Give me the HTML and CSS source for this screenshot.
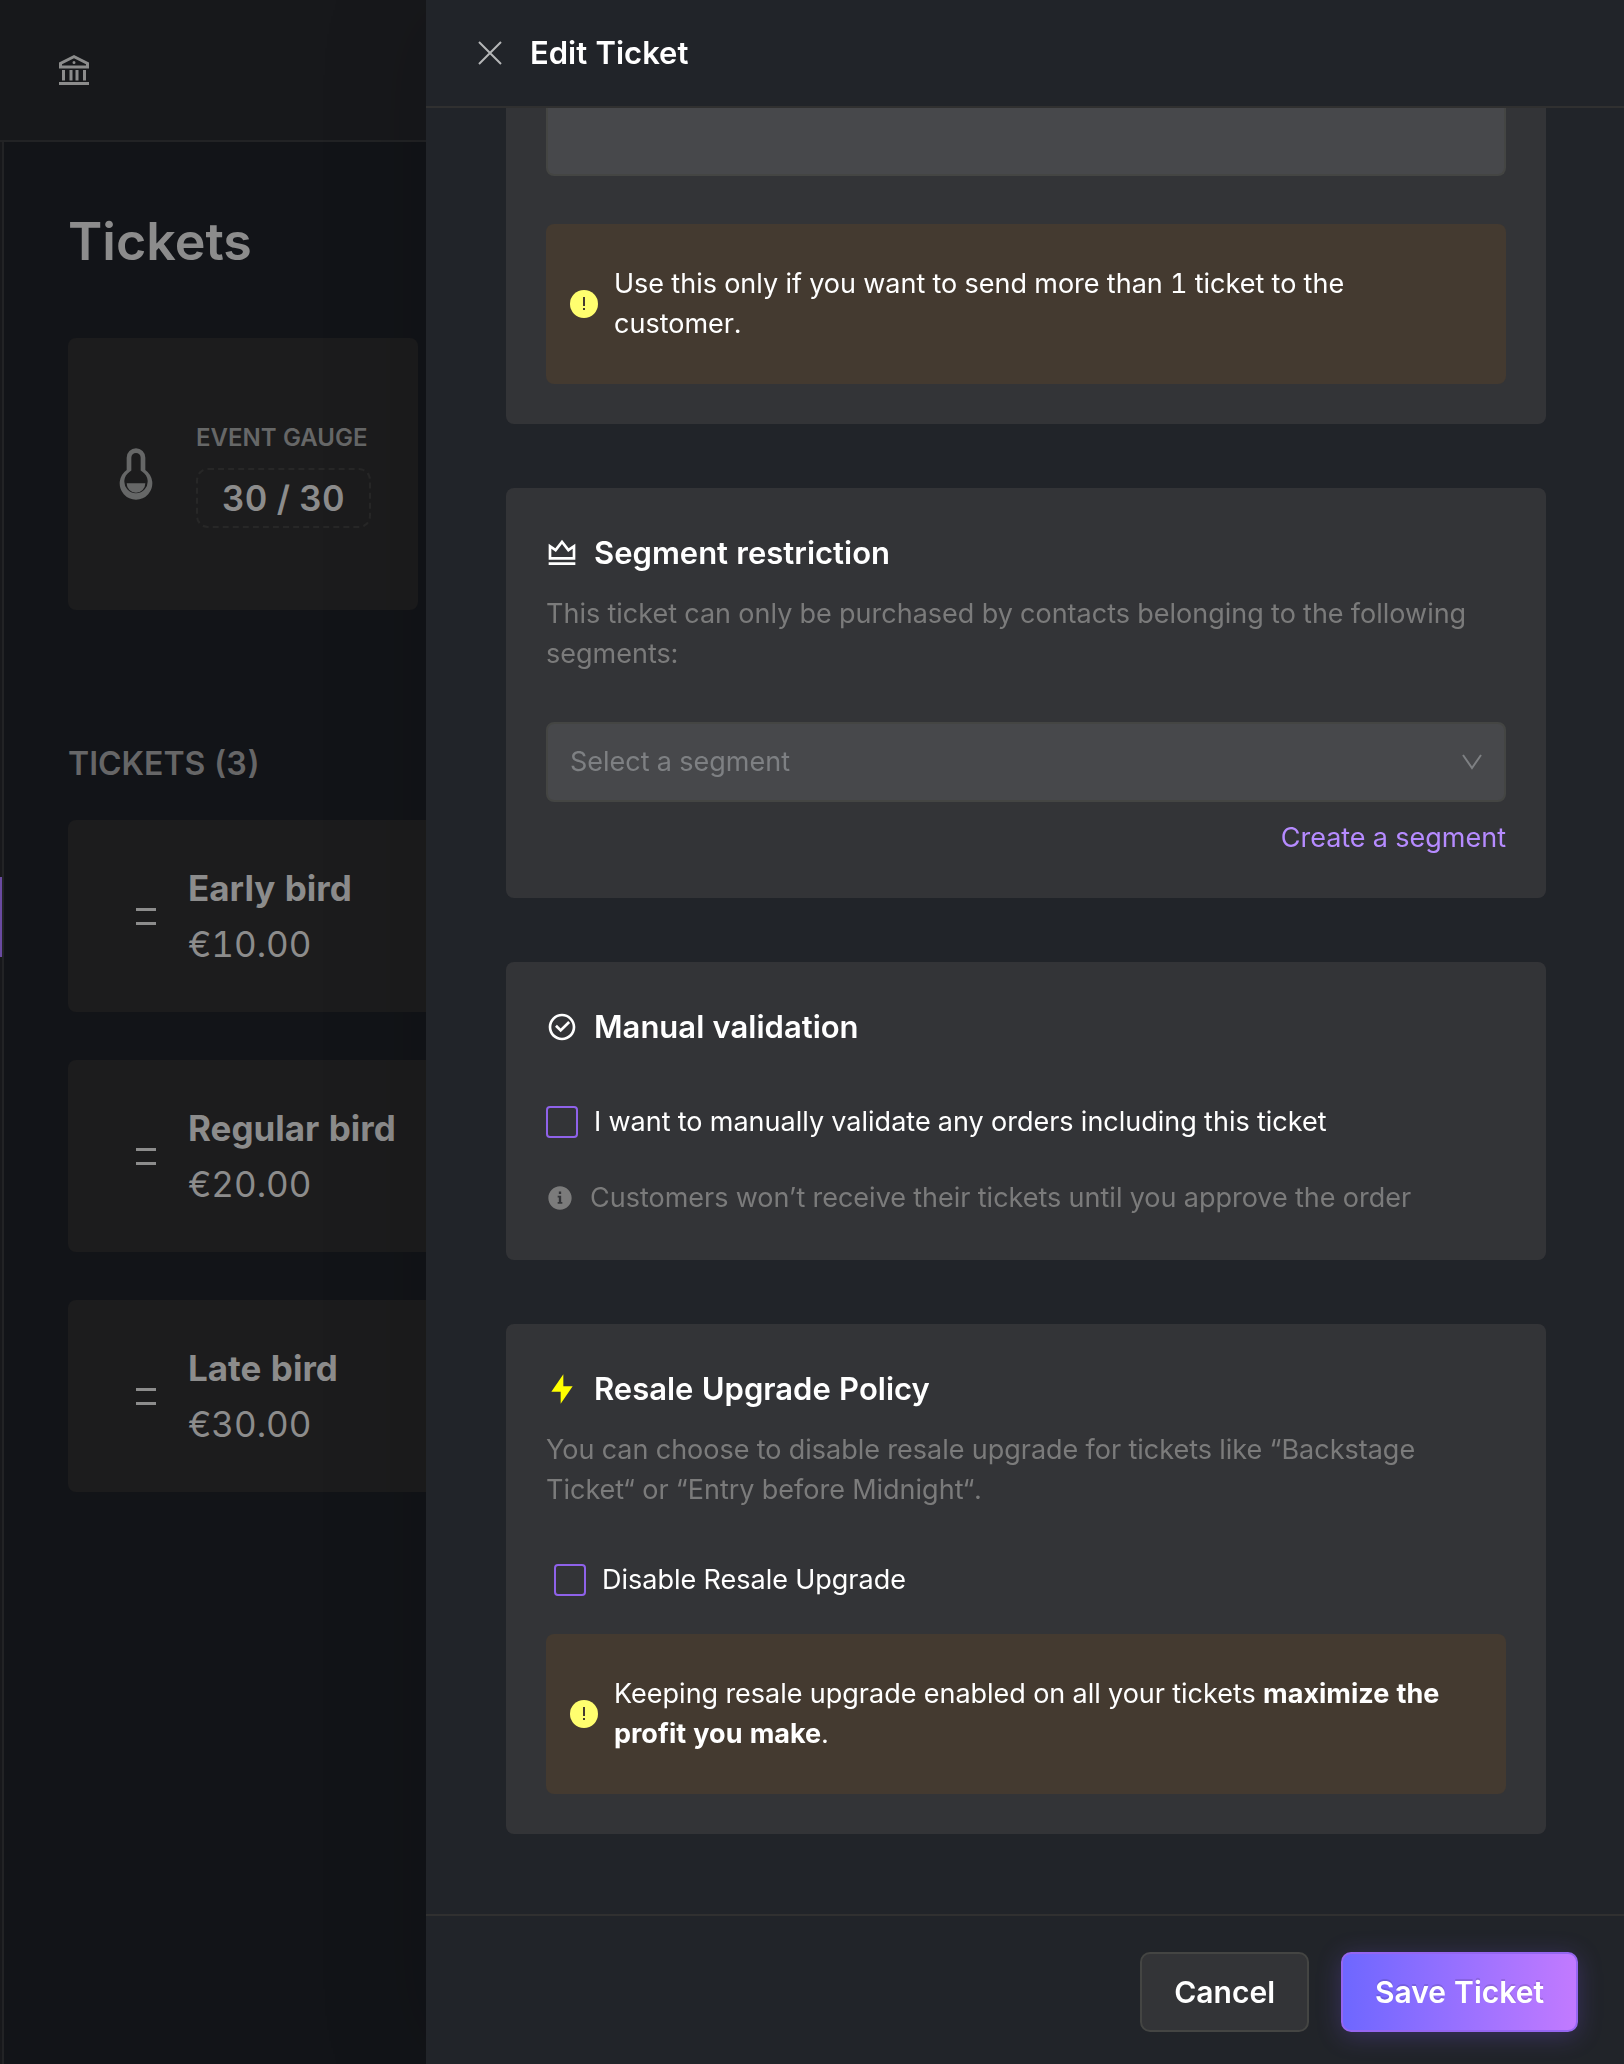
FILE: index.html
```html
<!doctype html>
<html lang="en">
    <head>
        <meta charset="UTF-8" />
        <meta name="viewport" content="width=device-width, initial-scale=1" />
        <title>Edit Ticket</title>
        <link rel="stylesheet" href="styles.css">
    </head>

    <body>
        <div class="app">
            <header class="topbar">
                <svg class="topbar-icon" viewBox="0 0 24 24">
                    <path d="M2 20h20v2H2v-2zm2-8h2v7H4v-7zm5 0h2v7H9v-7zm4 0h2v7h-2v-7zm5 0h2v7h-2v-7zM2 7l10-5 10 5v4H2V7zm2 1.236V9h16v-.764l-8-4-8 4zM12 8a1 1 0 1 1 0-2 1 1 0 0 1 0 2z" />
                </svg>
            </header>
            <div class="layout">
                <nav class="sidebar"><span class="sidebar-active"></span></nav>
                <main class="content">
                    <h1>Tickets</h1>
                    <section class="gauge">
                        <svg class="gauge-icon" viewBox="0 0 24 24">
                            <path d="M8 10.255V5a4 4 0 1 1 8 0v5.255a7 7 0 1 1-8 0zM8 16a4 4 0 1 0 8 0H8zm1.144-4.895a5 5 0 1 0 5.712 0L14 10.511V5a2 2 0 1 0-4 0v5.51l-.856.595z" />
                        </svg>
                        <div>
                            <div class="gauge-label">EVENT GAUGE</div>
                            <div class="gauge-value">30 / 30</div>
                        </div>
                    </section>
                    <h2>TICKETS (3)</h2>
                    <ul class="tickets">
                        <li class="ticket">
                            <span class="handle"></span>
                            <div>
                                <strong>Early bird</strong>
                                <p>€10.00</p>
                            </div>
                        </li>
                        <li class="ticket">
                            <span class="handle"></span>
                            <div>
                                <strong>Regular bird</strong>
                                <p>€20.00</p>
                            </div>
                        </li>
                        <li class="ticket">
                            <span class="handle"></span>
                            <div>
                                <strong>Late bird</strong>
                                <p>€30.00</p>
                            </div>
                        </li>
                    </ul>
                </main>
            </div>
        </div>

        <form class="drawer" role="dialog" aria-labelledby="drawer-title">
            <header class="drawer-header">
                <button type="button" class="close" aria-label="Close">
                    <svg viewBox="0 0 24 24">
                        <path d="M1 1l22 22M23 1L1 23" />
                    </svg>
                </button>
                <div class="drawer-title" id="drawer-title">Edit Ticket</div>
            </header>

            <div class="drawer-body">
                <section class="card card-first">
                    <input type="text" class="field" aria-label="Tickets per order" />
                    <div class="alert">
                        <svg class="alert-icon" viewBox="0 0 28 28">
                            <circle cx="14" cy="14" r="14" />
                            <path d="M13 7h2v9h-2zM13 18h2v2h-2z" />
                        </svg>
                        <p>Use this only if you want to send more than 1 ticket to the customer.</p>
                    </div>
                </section>

                <section class="card">
                    <h3>
                        <svg viewBox="0 0 24 24">
                            <path d="M2 19h20v2H2v-2zM2 5l5 3.5L12 2l5 6.5L22 5v12H2V5zm2 3.841V15h16V8.841l-3.42 2.394L12 5.28l-4.58 5.955L4 8.84z" />
                        </svg>
                        Segment restriction
                    </h3>
                    <p class="description">This ticket can only be purchased by contacts belonging to the following segments:</p>
                    <div class="select-wrap">
                        <select class="field" aria-label="Segment">
                            <option>Select a segment</option>
                        </select>
                        <svg class="chevron" viewBox="0 0 20 16">
                            <path d="M1 1l9 13 9-13" />
                        </svg>
                    </div>
                    <a class="create-link" href="#">Create a segment</a>
                </section>

                <section class="card">
                    <h3>
                        <svg viewBox="0 0 24 24">
                            <path d="M12 22C6.477 22 2 17.523 2 12S6.477 2 12 2s10 4.477 10 10-4.477 10-10 10zm0-2a8 8 0 1 0 0-16 8 8 0 0 0 0 16zm-.997-4L6.76 11.757l1.414-1.414 2.829 2.829 5.656-5.657 1.415 1.414L11.003 16z" />
                        </svg>
                        Manual validation
                    </h3>
                    <label class="check">
                        <input type="checkbox" />
                        I want to manually validate any orders including this ticket
                    </label>
                    <p class="hint">
                        <svg viewBox="0 0 24 24">
                            <path d="M12 22C6.477 22 2 17.523 2 12S6.477 2 12 2s10 4.477 10 10-4.477 10-10 10zm-2-12v1.500h1V15.500h-1V17h4v-1.500h-1V10h-3zm1-3.500v2h2v-2h-2z" />
                        </svg>
                        Customers won’t receive their tickets until you approve the order
                    </p>
                </section>

                <section class="card">
                    <h3>
                        <svg class="flash" viewBox="0 0 24 24">
                            <path d="M13 10h7l-9 13v-9H4l9-13z" />
                        </svg>
                        Resale Upgrade Policy
                    </h3>
                    <p class="description">You can choose to disable resale upgrade for tickets like “Backstage Ticket“ or “Entry before Midnight“.</p>
                    <label class="check check-inset">
                        <input type="checkbox" />
                        Disable Resale Upgrade
                    </label>
                    <div class="alert">
                        <svg class="alert-icon" viewBox="0 0 28 28">
                            <circle cx="14" cy="14" r="14" />
                            <path d="M13 7h2v9h-2zM13 18h2v2h-2z" />
                        </svg>
                        <p>Keeping resale upgrade enabled on all your tickets <b>maximize the profit you make</b>.</p>
                    </div>
                </section>
            </div>

            <footer class="drawer-footer">
                <button type="button" class="btn">Cancel</button>
                <button type="submit" class="btn btn-primary">Save Ticket</button>
            </footer>
        </form>
    </body>
</html>
```
FILE: styles.css
```css
* {
    box-sizing: border-box;
    margin: 0;
    padding: 0;
}

body {
    background: #121418;
    color: #8c8c8c;
    font-family: Inter, "Liberation Sans", sans-serif;
    font-size: 27px;
    font-variant-numeric: tabular-nums;
    line-height: 40px;
    height: 100vh;
    overflow: hidden;
}

button,
input,
select {
    font: inherit;
    color: inherit;
}

/* page behind the drawer */
.app {
    display: flex;
    flex-direction: column;
    height: 100%;
}

.topbar {
    display: flex;
    align-items: center;
    height: 142px;
    flex-shrink: 0;
    padding: 0 56px;
    background: #17181b;
    border-bottom: 2px solid #222325;
}

.topbar-icon {
    width: 36px;
    height: 36px;
    fill: #8c8c8c;
}

.layout {
    display: flex;
    flex: 1;
}

.sidebar {
    width: 4px;
    padding-top: 735px;
    background: #17181b;
    border-right: 2px solid #222325;
}

.sidebar-active {
    display: block;
    height: 80px;
    background: #6a4aa0;
}

.content {
    flex: 1;
    padding: 64px;
}

h1 {
    margin-bottom: 60px;
    font-size: 52px;
    line-height: 72px;
    font-weight: 600;
}

.gauge {
    display: flex;
    align-items: center;
    gap: 32px;
    width: 350px;
    height: 272px;
    margin-bottom: 128px;
    padding: 0 40px;
    background: #1c1c1d;
    border-radius: 8px;
}

.gauge-icon {
    width: 56px;
    height: 56px;
    fill: #666767;
}

.gauge-label {
    margin-bottom: 12px;
    color: #666767;
    font-size: 24px;
    line-height: 36px;
    font-weight: 600;
}

.gauge-value {
    width: fit-content;
    padding: 0 24px;
    border: 2px dashed #272727;
    border-radius: 12px;
    font-size: 35px;
    line-height: 56px;
    font-weight: 600;
}

h2 {
    margin-bottom: 30px;
    color: #666667;
    font-size: 32px;
    line-height: 52px;
    font-weight: 600;
}

.tickets {
    display: flex;
    flex-direction: column;
    gap: 48px;
    list-style: none;
}

.ticket {
    display: flex;
    align-items: center;
    gap: 32px;
    padding: 40px 68px;
    background: #1c1c1d;
    border-radius: 8px;
    font-size: 35px;
    line-height: 56px;
}

.handle {
    width: 20px;
    height: 17px;
    border-top: 3px solid #8c8c8c;
    border-bottom: 3px solid #8c8c8c;
}

/* drawer */
.drawer {
    position: fixed;
    top: 0;
    right: 0;
    bottom: 0;
    left: 426px;
    display: flex;
    flex-direction: column;
    background: #212429;
    color: #fff;
    box-shadow: -12px 0 96px rgba(0, 0, 0, 0.12);
}

.drawer-header {
    display: flex;
    align-items: center;
    gap: 24px;
    height: 108px;
    flex-shrink: 0;
    padding: 0 48px;
    border-bottom: 2px solid #303030;
}

.close {
    display: flex;
    width: 32px;
    height: 32px;
    padding: 4px;
    border: none;
    background: none;
    cursor: pointer;
}

.close svg {
    width: 24px;
    height: 24px;
    fill: none;
    stroke: #b5b6b7;
    stroke-width: 2;
}

.drawer-title {
    font-size: 31px;
    font-weight: 600;
}

.drawer-body {
    display: flex;
    flex-direction: column;
    gap: 64px;
    flex: 1;
    min-height: 0;
    padding: 0 78px 0 80px;
    overflow: hidden;
}

.card {
    padding: 40px;
    background: #333437;
    border-radius: 8px;
}

.card-first {
    padding-top: 0;
    border-radius: 0 0 8px 8px;
}

.card-first .field {
    height: 68px;
    margin-bottom: 48px;
    border-top: none;
    border-radius: 0 0 8px 8px;
}

.field {
    display: block;
    width: 100%;
    height: 80px;
    padding: 0 22px;
    border: 2px solid #444543;
    border-radius: 8px;
    background: #47484b;
    color: #7e8083;
    appearance: none;
    outline: none;
}

.alert {
    display: flex;
    align-items: center;
    gap: 16px;
    padding: 40px 48px 40px 24px;
    background: #443a30;
    border-radius: 8px;
}

.alert-icon {
    width: 28px;
    height: 28px;
    flex-shrink: 0;
    fill: #fffe6f;
}

.alert-icon path {
    fill: #443a30;
}

.alert b {
    font-weight: 700;
}

h3 {
    display: flex;
    align-items: center;
    gap: 16px;
    font-size: 31px;
    line-height: 50px;
    font-weight: 600;
}

h3 svg {
    width: 32px;
    height: 32px;
    fill: #fff;
}

h3 .flash {
    fill: #ffff00;
}

.description {
    margin: 16px 0 48px;
    color: #7b7b7b;
}

.select-wrap {
    position: relative;
    margin-bottom: 16px;
}

.chevron {
    position: absolute;
    top: 32px;
    right: 24px;
    width: 20px;
    height: 16px;
    fill: none;
    stroke: #7e8083;
    stroke-width: 2;
    pointer-events: none;
}

.create-link {
    display: block;
    color: #b68bff;
    text-align: right;
    text-decoration: none;
}

.check {
    display: flex;
    align-items: center;
    gap: 16px;
    margin-top: 48px;
    margin-bottom: 32px;
    line-height: 44px;
}

.check-inset {
    padding-left: 8px;
}

.check input {
    width: 32px;
    height: 32px;
    border: 2px solid #8f62ea;
    border-radius: 4px;
    appearance: none;
}

.hint {
    display: flex;
    align-items: center;
    gap: 16px;
    color: #7b7b7b;
    line-height: 44px;
}

.hint svg {
    width: 28px;
    height: 28px;
    fill: #7b7b7b;
}

.drawer-footer {
    display: flex;
    justify-content: flex-end;
    gap: 32px;
    padding: 36px 46px 32px;
    border-top: 2px solid #303030;
}

.btn {
    height: 80px;
    padding: 0 32px;
    border: 2px solid #444543;
    border-radius: 10px;
    background: #333437;
    color: #fff;
    font-size: 30px;
    font-weight: 600;
    cursor: pointer;
}

.btn-primary {
    border-color: #9566f0;
    background: linear-gradient(90deg, #6e67ff, #c27aff);
    box-shadow: 0 4px 24px rgba(130, 90, 255, 0.25);
    text-shadow: 0 -2px 0 rgba(0, 0, 0, 0.12);
}
```
